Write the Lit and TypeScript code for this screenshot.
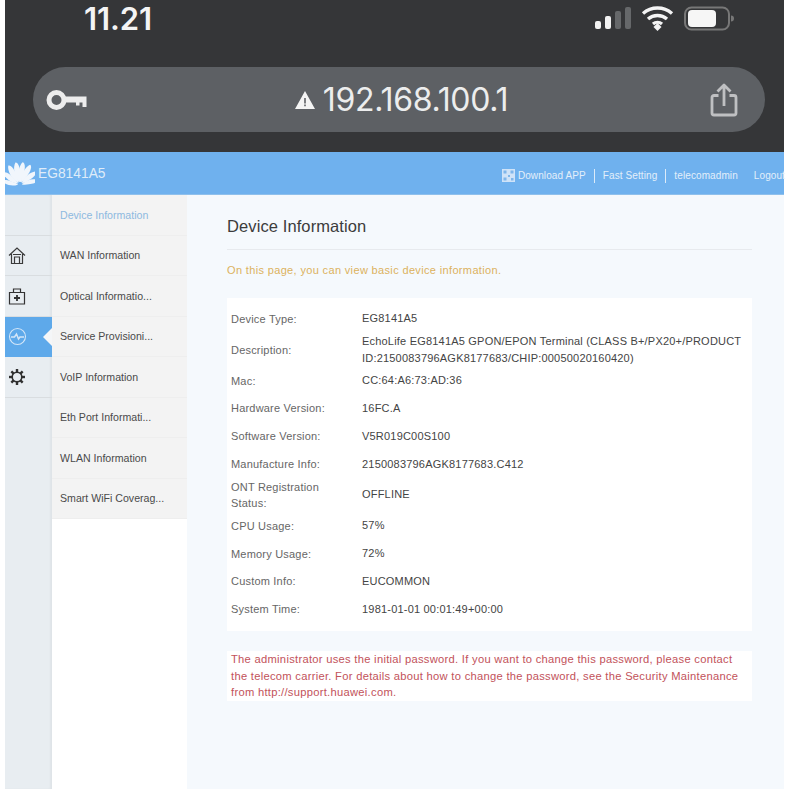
import { LitElement, html, css, svg } from "lit";
import { customElement } from "lit/decorators.js";

const menu = ["Device Information","WAN Information","Optical Informatio...","Service Provisioni...","VoIP Information","Eth Port Informati...","WLAN Information","Smart WiFi Coverag..."];
const rows: [string,string,string?][] = [
  ["Device Type:","EG8141A5"],
  ["Description:","EchoLife EG8141A5 GPON/EPON Terminal (CLASS B+/PX20+/PRODUCT ID:2150083796AGK8177683/CHIP:00050020160420)","tall"],
  ["Mac:","CC:64:A6:73:AD:36"],
  ["Hardware Version:","16FC.A"],
  ["Software Version:","V5R019C00S100"],
  ["Manufacture Info:","2150083796AGK8177683.C412"],
  ["ONT Registration Status:","OFFLINE","tall"],
  ["CPU Usage:","57%"],
  ["Memory Usage:","72%"],
  ["Custom Info:","EUCOMMON"],
  ["System Time:","1981-01-01 00:01:49+00:00"],
];

const petals: [number,number][] = [[-76,.78],[-52,.9],[-29,.98],[-9,1],[9,1],[29,.98],[52,.9],[76,.78]];

const gearTeeth = [0,45,90,135,180,225,270,315];

@customElement("app-root")
export class AppRoot extends LitElement {
  static styles = css`
    :host { display:block; width:789px; height:789px; background:#fff; overflow:hidden; font-family:"Liberation Sans",Arial,sans-serif; }
    .frame { margin-left:5px; width:779px; height:789px; display:flex; flex-direction:column; }
    .phone { height:152px; background:#353638; flex:none; display:flex; flex-direction:column; }
    .status { height:67px; display:flex; align-items:flex-start; justify-content:space-between; flex:none; }
    .time { margin:1px 0 0 79px; color:#f4f4f4; font:600 31px/36px Inter,"Liberation Sans",sans-serif; letter-spacing:-.1px; }
    .status-icons { display:flex; align-items:center; margin:6px 39px 0 0; }
    .urlbar { margin-left:28px; width:732px; height:65px; border-radius:33px; background:#5d6064; display:flex; align-items:center; padding:0 27px 0 13px; box-sizing:border-box; }
    .addr { flex:1; display:flex; align-items:center; justify-content:center; color:#eceded; font:400 32px/40px Inter,"Liberation Sans",sans-serif; letter-spacing:-.3px; gap:8px; padding-left:5px; }
    .head { height:43px; flex:none; background:#6fb1ee; border-bottom:1px solid #8fc0ec; box-sizing:border-box; display:flex; align-items:center; color:#e6f1fb; }
    .brand { font-size:13.8px; margin-left:3px; color:#dfecf9; }
    .links { margin-left:auto; display:flex; align-items:center; font-size:10px; letter-spacing:.1px; white-space:nowrap; color:#e3effa; margin-right:-1px; padding-top:5px; }
    .links .sep { width:1px; height:14px; background:#dcebf9; margin:0 8px; }
    .links .qr { margin-right:3px; }
    .logout { margin-left:16px; }
    .main { flex:1; display:flex; min-height:0; }
    .rail { width:47px; flex:none; background:#e8edf1; display:flex; flex-direction:column; box-shadow:inset -2px 0 2px rgba(0,0,0,.04); }
    .rail div { height:40.5px; box-sizing:border-box; display:flex; align-items:center; padding-left:3px; border-bottom:1px solid #d9dde0; position:relative; }
    .rail div.on { background:#5ea9ea; border-bottom:none; }
    .rail div.on::after { content:""; position:absolute; right:0; top:11px; border:9px solid transparent; border-right-color:#f4f6f8; border-left:none; }
    .sub { width:135px; flex:none; background:#fff; }
    .sub div { height:40.5px; box-sizing:border-box; background:#f3f3f3; border-bottom:1px solid #eeeeee; padding-left:8px; display:flex; align-items:center; font-size:10.6px; color:#4a4a4a; }
    .sub div.on { color:#8db9e0; }
    .content { flex:1; background:#f5f9fd; padding:0 32px 0 40px; min-width:0; }
    h1 { margin:0; height:55px; box-sizing:border-box; padding-top:21px; font-size:16.5px; line-height:20px; font-weight:400; color:#3c3c3c; letter-spacing:.1px; border-bottom:1px solid #e7eaee; }
    .hint { margin:0; padding-top:13px; height:48px; box-sizing:border-box; font-size:11px; line-height:14px; color:#dcb25e; letter-spacing:.35px; }
    .card { background:#fff; padding:7px 4px 8px; font-size:11px; color:#4a4a4a; letter-spacing:.2px; }
    .row { display:flex; align-items:center; height:27.8px; }
    .row.tall { height:34px; }
    .k { width:131px; flex:none; line-height:16px; color:#666; padding-right:20px; box-sizing:border-box; }
    .v { flex:1; line-height:17px; color:#444; }
    .warn { margin-top:20px; background:#fff; padding:0 4px; font-size:11.2px; line-height:16.6px; color:#c2525a; letter-spacing:.28px; height:50px; box-sizing:border-box; }
  `;

  private railIcon(i: number) {
    if (i === 1) return svg`<svg width="18" height="19" viewBox="0 0 18 19" fill="none" stroke="#3a3a3a" stroke-width="1.2"><path d="M1 9.500 9 2l8 7.500M3.500 8V17.500h11V8M6.500 17.500v-6.500h5v6.500M5 8.500h8"/></svg>`;
    if (i === 2) return svg`<svg width="18" height="18" viewBox="0 0 18 18" fill="none" stroke="#333" stroke-width="1.2"><path d="M1.500 5.500h15V17h-15zM5.500 5.500V2h7v3.500"/><path d="M9 8v6M6 11h6" stroke-width="1.800"/></svg>`;
    if (i === 3) return svg`<svg width="19" height="19" viewBox="0 0 19 19" fill="none" stroke="#d3e6f8" stroke-width="1.100"><circle cx="9.500" cy="9.500" r="8"/><path d="M3 10h3.500l2-3 2 5 1.500-2h4" stroke-width="1.500"/></svg>`;
    if (i === 4) return svg`<svg width="18" height="18" viewBox="0 0 18 18" fill="none" stroke="#2f2f2f" stroke-width="1.600"><circle cx="9" cy="9" r="4.800"/>${gearTeeth.map((a)=>svg`<path transform="rotate(${a} 9 9)" d="M9 1v3.500" stroke-width="2.400"/>`)}</svg>`;
    return "";
  }

  render() {
    return html`<div class="frame">
      <div class="phone">
        <div class="status">
          <div class="time">11.21</div>
          <div class="status-icons">
            <svg width="150" height="26" viewBox="0 0 150 26">
              <rect x="0" y="15" width="6" height="8" rx="2" fill="#f2f2f2"/>
              <rect x="10" y="10" width="6" height="13" rx="2" fill="#f2f2f2"/>
              <rect x="20" y="5" width="6" height="18" rx="2" fill="#66686a"/>
              <rect x="30" y="1" width="6" height="22" rx="2" fill="#66686a"/>
              <path d="M48 7.500a22 22 0 0 1 29 0M53 13a14.500 14.500 0 0 1 19 0M58 18a7 7 0 0 1 9 0" fill="none" stroke="#f4f4f4" stroke-width="3.400"/>
              <path d="M58.500 21 62.500 17l4 4-4 4z" fill="#f4f4f4"/>
              <rect x="90" y="1.500" width="44" height="22" rx="6.500" fill="none" stroke="#777" stroke-width="2"/>
              <rect x="93" y="4" width="28" height="17" rx="4" fill="#f6f6f6"/>
              <path d="M136 9.500a3 3 0 0 1 0 6z" fill="#777"/>
            </svg>
          </div>
        </div>
        <div class="urlbar">
          <svg width="42" height="22" viewBox="0 0 42 22">
            <circle cx="10.500" cy="11" r="7.500" fill="none" stroke="#ededed" stroke-width="5"/>
            <path d="M18 7.500h22.500v10.500h-4v-4.500h-3v3h-3.500v-3H18z" fill="#ededed"/>
          </svg>
          <div class="addr">
            <svg width="20" height="18" viewBox="0 0 20 18"><path fill-rule="evenodd" d="M10 0 20 18H0zM9.200 7v5.500h1.600V7zM9.200 13.500v1.800h1.600v-1.800z" fill="#f4f4f4"/></svg>
            <span>192.168.100.1</span>
          </div>
          <svg width="28" height="34" viewBox="0 0 28 34" fill="none" stroke="#bfc0c2" stroke-width="2.800" stroke-linejoin="round">
            <path d="M8.500 12.500H4a2 2 0 0 0-2 2V30a2 2 0 0 0 2 2h20a2 2 0 0 0 2-2V14.500a2 2 0 0 0-2-2h-4.500M14 23V3M7.500 8.500 14 2l6.500 6.500"/>
          </svg>
        </div>
      </div>
      <div class="head">
        <svg width="30" height="26" viewBox="0 0 30 26">
          ${petals.map(([a,r]) => svg`<path transform="translate(15 25) rotate(${a}) scale(${r})" d="M-.3 -3 C-4.800 -9 -4.200 -19 -1 -23 C1 -23 4.200 -19 .3 -3 Z" fill="#f1f6fc"/>`)}
        </svg>
        <span class="brand">EG8141A5</span>
        <div class="links">
          <svg class="qr" width="13" height="13" viewBox="0 0 13 13"><rect width="13" height="13" fill="#cfe3f8"/><path d="M1.500 1.500h3v3h-3zM8.500 1.500h3v3h-3zM1.500 8.500h3v3h-3zM6 6h2v2H6zM9 9h2.500v2.500H9z" fill="#7fb6ea"/></svg>
          <span>Download APP</span><i class="sep"></i><span>Fast Setting</span><i class="sep"></i><span>telecomadmin</span><span class="logout">Logout</span>
        </div>
      </div>
      <div class="main">
        <div class="rail">
          ${[0,1,2,3,4].map((i) => html`<div class="${i===3?"on":""}">${this.railIcon(i)}</div>`)}
        </div>
        <div class="sub">${menu.map((m,i)=>html`<div class="${i===0?"on":""}">${m}</div>`)}</div>
        <div class="content">
          <h1>Device Information</h1>
          <p class="hint">On this page, you can view basic device information.</p>
          <div class="card">
            ${rows.map(([k,v,t])=>html`<div class="row ${t??""}"><div class="k">${k}</div><div class="v">${v}</div></div>`)}
          </div>
          <div class="warn">The administrator uses the initial password. If you want to change this password, please contact the telecom carrier. For details about how to change the password, see the Security Maintenance from http://support.huawei.com.</div>
        </div>
      </div>
    </div>`;
  }
}
